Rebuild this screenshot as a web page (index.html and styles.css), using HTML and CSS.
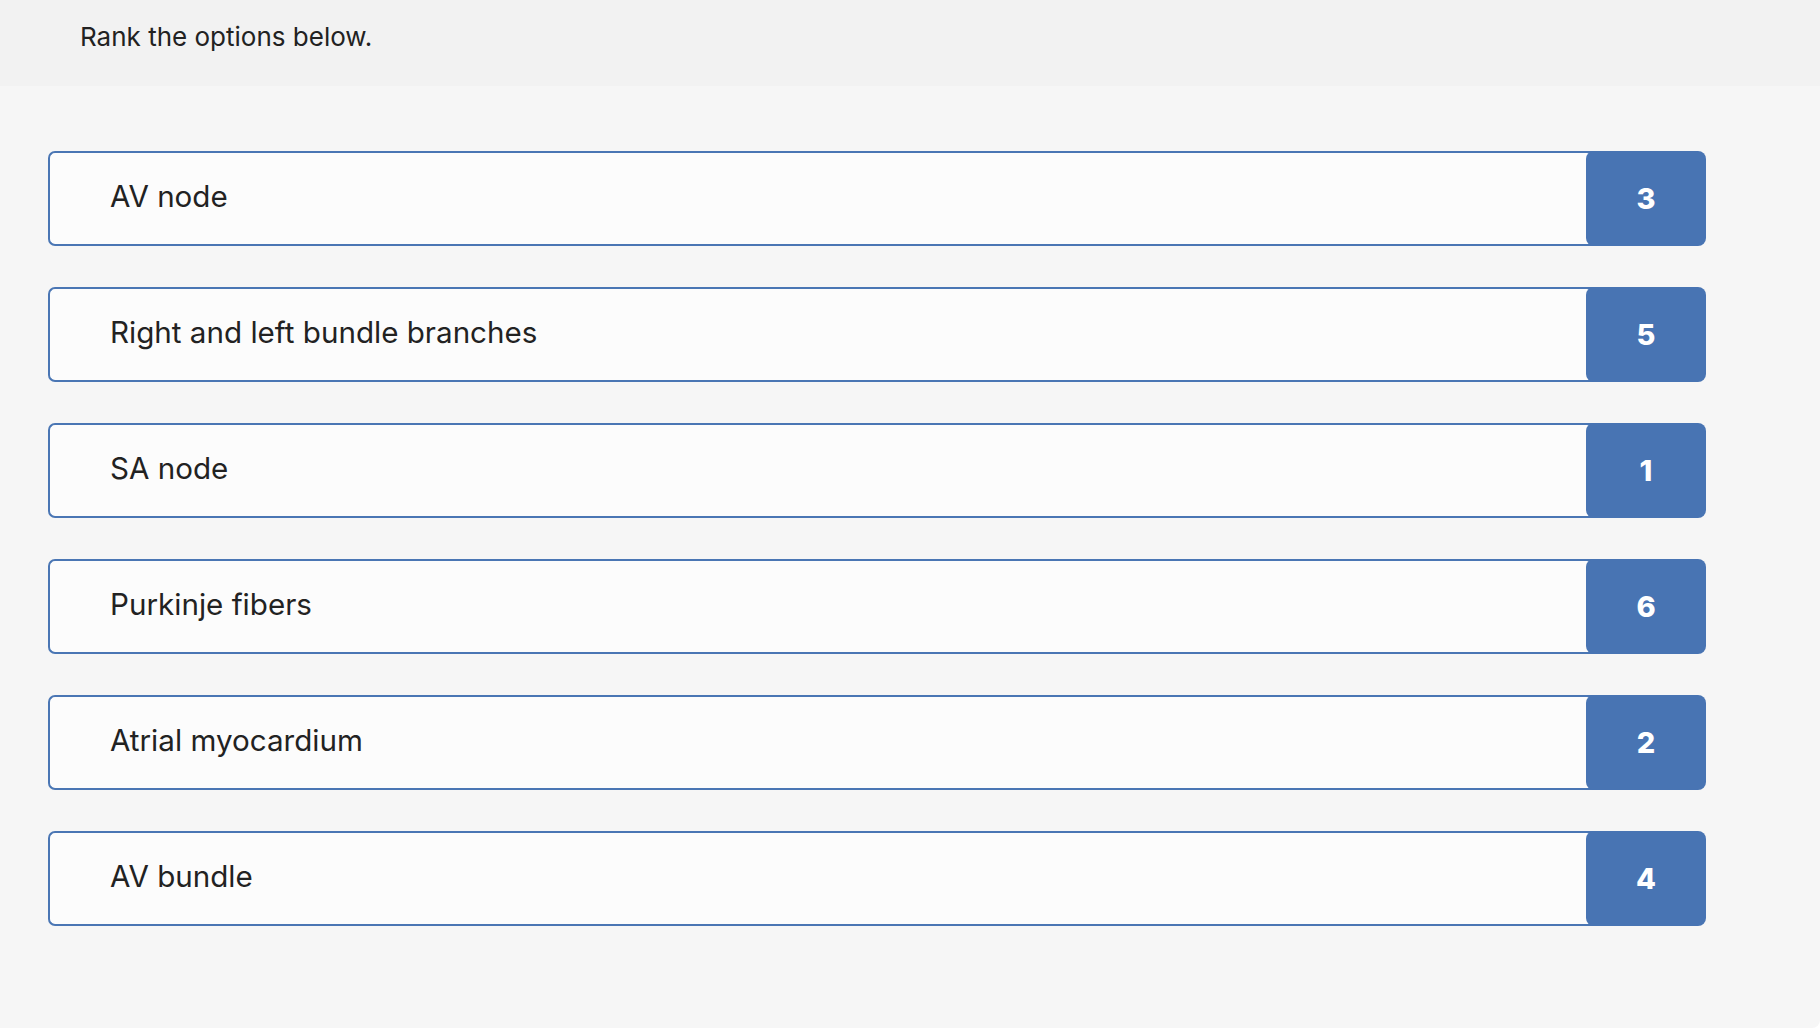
FILE: index.html
```html
<!DOCTYPE html>
<html>
<head>
<meta charset="utf-8">
<link rel="stylesheet" href="styles.css">
</head>
<body>
<div class="header"><p class="prompt">Rank the options below.</p></div>
<div class="main">
  <div class="list">
    <div class="row"><div class="label">AV node</div><div class="badge">3</div></div>
    <div class="row"><div class="label">Right and left bundle branches</div><div class="badge">5</div></div>
    <div class="row"><div class="label">SA node</div><div class="badge">1</div></div>
    <div class="row"><div class="label">Purkinje fibers</div><div class="badge">6</div></div>
    <div class="row"><div class="label">Atrial myocardium</div><div class="badge">2</div></div>
    <div class="row"><div class="label">AV bundle</div><div class="badge">4</div></div>
  </div>
</div>
</body>
</html>
```
FILE: styles.css
```css
html, body {
  margin: 0;
  padding: 0;
  background: #ffffff;
  font-family: Inter, Lato, sans-serif;
  color: #222222;
}
.header {
  height: 86px;
  background: #f2f2f2;
  display: flex;
  align-items: flex-start;
  box-sizing: border-box;
  padding-left: 80px;
  padding-top: 21px;
}
.prompt {
  margin: 0;
  font-size: 26px;
  line-height: 32px;
}
.main {
  background: #f6f6f6;
  height: 942px;
  box-sizing: border-box;
  padding: 65px 0 0 48px;
  border-bottom-right-radius: 8px;
}
.list {
  width: 1658px;
  display: flex;
  flex-direction: column;
  gap: 41px;
}
.row {
  height: 95px;
  display: flex;
  align-items: stretch;
}
.label {
  flex: 1;
  margin-right: -14px;
  box-sizing: border-box;
  display: flex;
  align-items: center;
  background: #fcfcfc;
  border: 2px solid #4a76b4;
  border-right: none;
  border-radius: 7px 0 0 7px;
  padding-left: 60px;
  padding-bottom: 6px;
  font-size: 29.6px;
}
.badge {
  flex: none;
  width: 120px;
  background: #4874b3;
  border-radius: 8px;
  color: #ffffff;
  font-weight: 800;
  font-size: 29px;
  display: flex;
  align-items: center;
  justify-content: center;
}
```
